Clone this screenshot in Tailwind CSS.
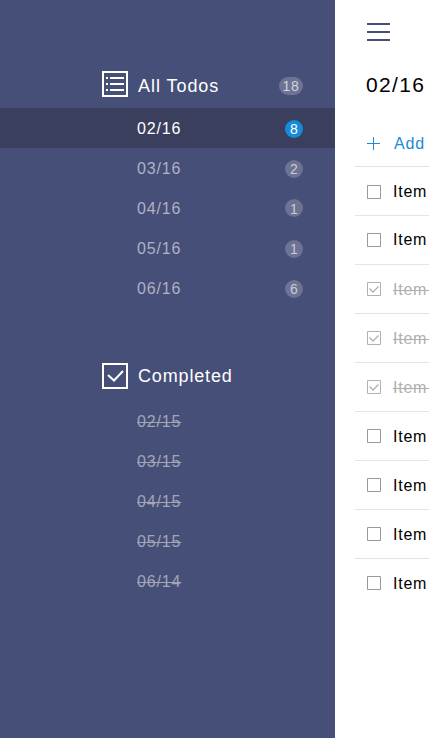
<!DOCTYPE html>
<html lang="en">
<head>
<meta charset="utf-8">
<title>Todos</title>
<script src="https://cdn.jsdelivr.net/npm/@tailwindcss/browser@4"></script>
</head>
<body class="w-[429px] h-[738px] overflow-hidden flex bg-white font-['Liberation_Sans',Arial,sans-serif]">
<aside class="w-[335px] h-full shrink-0 bg-[#464f78] pt-16 text-base tracking-[0.85px]">
  <div class="h-11 flex items-center pl-[102px] pr-8 text-white">
    <svg class="w-[26px] h-[26px] mr-[10px] -mt-1" viewBox="0 0 26 26" fill="none" stroke="white" stroke-width="2"><path d="M1 1H25V25H1ZM4 7H6M8 7H22M4 13H6M8 13H22M4 19H6M8 19H22"/></svg>
    <h2 class="text-lg leading-6 tracking-[0.95px]">All Todos</h2>
    <span class="ml-auto w-6 h-[18px] rounded-full bg-[#6c7393] text-[#d2d4df] text-[14px] tracking-[0.8px] leading-[18px] text-center">18</span>
  </div>
  <nav>
    <a class="h-10 flex items-center pl-[137px] pr-8 pt-[2px] bg-[#3a3f5e] text-white"><span>02/16</span><span class="ml-auto w-[18px] h-[18px] rounded-full bg-[#168cd8] text-[14px] leading-[18px] tracking-normal text-center">8</span></a>
    <a class="h-10 flex items-center pl-[137px] pr-8 pt-[2px] text-[#afb2c4]"><span>03/16</span><span class="ml-auto w-[18px] h-[18px] rounded-full bg-[#6c7393] text-[#c9cbd8] text-[14px] leading-[18px] tracking-normal text-center">2</span></a>
    <a class="h-10 flex items-center pl-[137px] pr-8 pt-[2px] text-[#afb2c4]"><span>04/16</span><span class="ml-auto w-[18px] h-[18px] rounded-full bg-[#6c7393] text-[#c9cbd8] text-[14px] leading-[20px] tracking-normal text-center -mt-[2px]">1</span></a>
    <a class="h-10 flex items-center pl-[137px] pr-8 pt-[2px] text-[#afb2c4]"><span>05/16</span><span class="ml-auto w-[18px] h-[18px] rounded-full bg-[#6c7393] text-[#c9cbd8] text-[14px] leading-[18px] tracking-normal text-center">1</span></a>
    <a class="h-10 flex items-center pl-[137px] pr-8 pt-[2px] text-[#afb2c4]"><span>06/16</span><span class="ml-auto w-[18px] h-[18px] rounded-full bg-[#6c7393] text-[#c9cbd8] text-[14px] leading-[18px] tracking-normal text-center">6</span></a>
  </nav>
  <div class="mt-12 h-10 flex items-center pl-[102px] text-white">
    <svg class="w-[26px] h-[26px] mr-[10px]" viewBox="0 0 26 26" fill="none" stroke="white" stroke-width="2"><path d="M1 1H25V25H1ZM6 12L12 17.5L21 8"/></svg>
    <h2 class="text-lg leading-6 tracking-[0.85px]">Completed</h2>
  </div>
  <nav class="mt-[6px] text-[#a1a5b7]">
    <a class="h-10 flex items-center pl-[137px] line-through">02/15</a>
    <a class="h-10 flex items-center pl-[137px] line-through">03/15</a>
    <a class="h-10 flex items-center pl-[137px] line-through">04/15</a>
    <a class="h-10 flex items-center pl-[137px] line-through">05/15</a>
    <a class="h-10 flex items-center pl-[137px] line-through">06/14</a>
  </nav>
</aside>
<main class="flex-1 min-w-0 pl-5 pt-[23px] text-base tracking-[0.75px] text-black">
  <svg class="ml-3 w-[23px] h-[18px]" viewBox="0 0 23 18" stroke="#464f78" stroke-width="2"><path d="M0 1H23M0 9H23M0 17H23"/></svg>
  <h1 class="ml-[11px] mt-[30px] h-7 leading-7 text-[21px] tracking-[1.35px] whitespace-nowrap">02/16</h1>
  <div class="mt-[23px] h-[45px] flex items-center border-b border-[#e4e4e4] pl-3 text-[#198ad3]">
    <svg class="w-[13px] h-[13px] mr-[14px] -mt-[2px] shrink-0" viewBox="0 0 13 13" stroke="currentColor"><path d="M0 6.5H13M6.5 0V13"/></svg><span class="tracking-[0.9px]">Add</span>
  </div>
  <ul id="items" class="whitespace-nowrap overflow-hidden"></ul>
</main>
<script>
const states = [0, 0, 1, 1, 1, 0, 0, 0, 0];
document.getElementById('items').innerHTML = states.map((done, i) => `
  <li class="h-[49px] flex items-center pl-3 ${i < 8 ? 'border-b border-[#e4e4e4]' : 'pb-px'} ${done ? 'text-[#afafaf]' : ''} ${i === 0 ? 'pt-[2px]' : ''}">
    <svg class="w-[14px] h-[14px] mr-3 shrink-0" viewBox="0 0 14 14" fill="none" stroke="${done ? '#b0b0b0' : '#999'}"><path d="M.5 .5H13.5V13.5H.5Z"/>${done ? '<path stroke-width="1.3" d="M2.5 6.5L6 10L11.5 4.5"/>' : ''}</svg>
    <span class="${i > 1 ? 'pt-[2px]' : ''} ${done ? 'line-through' : ''}">Item${done ? '&nbsp;' : ''}</span>
  </li>`).join('');
</script>
</body>
</html>
